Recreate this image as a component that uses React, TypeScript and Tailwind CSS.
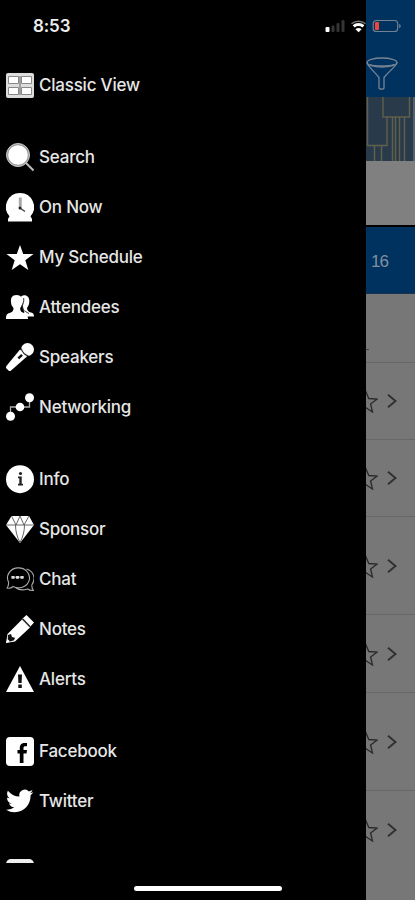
import React from 'react';

interface MenuItem {
  label: string;
  icon: React.ReactNode;
}

const menuGroups: MenuItem[][] = [
  [
    {
      label: 'Classic View',
      icon: (
        <>
          <rect x="0" y="2" width="28" height="25" rx="2" fill="#ddd" />
          <path d="M2.500 5.500h10v7h-10zM15.500 5.500h10v7h-10zM2.500 16.500h10v7h-10zM15.500 16.500h10v7h-10z" fill="#fff" stroke="#888" strokeWidth="1" />
          <path d="M14 5v19" stroke="#888" strokeWidth="1.500" />
        </>
      ),
    },
  ],
  [
    {
      label: 'Search',
      icon: (
        <>
          <circle cx="12" cy="12" r="11.500" fill="#999" stroke="#ccc" strokeWidth="1" />
          <circle cx="12" cy="12" r="9.800" />
          <path d="M20 20l7.500 7.500" stroke="#bbb" strokeWidth="2" />
        </>
      ),
    },
    {
      label: 'On Now',
      icon: (
        <>
          <path d="M14 0a14 14 0 0 1 10.500 23.300L26 26v2.500H2V26l1.500-2.700A14 14 0 0 1 14 0z" />
          <path d="M14 15l5 3.500" fill="none" stroke="#444" strokeWidth="1.500" />
          <path d="M14.300 4.500v10" stroke="#aaa" strokeWidth="3" />
          <circle cx="14" cy="15" r="1.500" fill="#222" />
        </>
      ),
    },
    {
      label: 'My Schedule',
      icon: <path d="M14 2l3.200 9H27.500l-8.200 6.200 3 9.800L14 21.200 5.700 27l3-9.800L.5 11h10.300z" />,
    },
    {
      label: 'Attendees',
      icon: (
        <>
          <path d="M15 3.500c4-3 9 0 8.300 5.500-.2 3-1.300 4.500-2.300 6 .2 3 1.500 3.700 4 4.500 2.200.8 3 1.500 3 4h-9z" />
          <path d="M10.500 2c4.500 0 6.300 3 5.900 7-.2 3-1 4.500-2.200 6 0 3.400 1.300 4.200 4 5 2.600.9 3.800 2 3.800 6H0c0-4 .8-5.200 3.500-6 2.500-.8 4-1.700 4-5C6 13.500 5.200 12 5 9c-.4-4 1-7 5.500-7z" />
          <path d="M17.700 5c.3 3-.2 5.500-1.700 8 0 3.500 2 4.800 7 7.500" fill="none" stroke="#333" strokeWidth="1" />
        </>
      ),
    },
    {
      label: 'Speakers',
      icon: (
        <>
          <circle cx="21.500" cy="6.500" r="6.500" />
          <path d="M14 6.500L0 23.500V25l3 3h1.500L21 13.500z" />
          <path d="M15.200 5.500c1 3.500 3.300 6.200 7.200 7.500" fill="none" stroke="#333" strokeWidth="1.100" />
          <path d="M11.500 14.500l3.700-3.500 1.700 1.700-3.700 3.500z" fill="#111" />
        </>
      ),
    },
    {
      label: 'Networking',
      icon: (
        <>
          <path d="M4.500 23V14H23.500V6" fill="none" stroke="#aaa" strokeWidth="1.300" />
          <circle cx="4.500" cy="23.300" r="4.500" />
          <circle cx="14" cy="14" r="4.300" />
          <circle cx="23.500" cy="4.700" r="4.500" />
        </>
      ),
    },
  ],
  [
    {
      label: 'Info',
      icon: (
        <>
          <circle cx="14" cy="14.200" r="14" />
          <path d="M12 11.500h3.700v7.300H17V20.500h-5v-1.700h1.300v-5.600H12z" fill="#222" />
          <circle cx="14.500" cy="8.500" r="1.600" fill="#222" />
        </>
      ),
    },
    {
      label: 'Sponsor',
      icon: (
        <>
          <path d="M5.500 1h17.500L28 10 14 28 0 10z" />
          <path d="M0 10h28M5.500 1l4.500 9 4-9 4 9 5-9M9.500 10c0 6 1.500 12 4.500 17.500 3-5.500 4.500-11.500 4.500-17.500" fill="none" stroke="#555" strokeWidth=".9" />
        </>
      ),
    },
    {
      label: 'Chat',
      icon: (
        <g fill="none" stroke="#aaa" strokeWidth="1.100">
          <path d="M2.500 17A11 10 0 1 1 7 21.500C5.500 23 3 23.500 1 23c1.200-1.500 1.800-3.500 1.500-6z" />
          <path d="M20.500 4C28 6 30 14 26 19.500c-.5 2.500.2 4.500 1.500 6-2.800.3-4.500-.5-6-1.500-4.500 1.500-9 .8-12-1.500" />
          <path d="M5.500 12.300h12.500" stroke="#777" strokeWidth="1.500" />
          <path d="M5.500 12.300h3m1.500 0h3m1.500 0h3" stroke="#ddd" strokeWidth="2.800" />
        </g>
      ),
    },
    {
      label: 'Notes',
      icon: (
        <>
          <path d="M20.500 0L28 7.500l-4 4.500-8-8zM16 4.500l8 8L9 26.500l-9 1.500 1.500-9z" />
          <path d="M16.500 3.800l7.700 7.900" stroke="#222" strokeWidth="1.300" />
          <path d="M2 20l3-1 1 3 3 .7-1 2.500-4.500 1.500-1.800-2z" fill="#111" />
          <path d="M0 28l1.500-4 2.500 2.500z" />
        </>
      ),
    },
    {
      label: 'Alerts',
      icon: (
        <>
          <path d="M14 1l14 26H0z" />
          <path d="M12 9.500h4l-.4 8.500h-3.200zM12.300 19.500h3.500V23h-3.500z" fill="#111" />
        </>
      ),
    },
  ],
  [
    {
      label: 'Facebook',
      icon: (
        <>
          <rect width="28" height="29" rx="4" />
          <path d="M13.800 26V16.500H11.500V13h2.300v-2c0-3.500 1.800-5 5-5H21v3.300h-1.600c-1.400 0-1.900.6-1.900 1.900V13H21l-.5 3.500h-3V26z" fill="#000" />
        </>
      ),
    },
    {
      label: 'Twitter',
      icon: (
        <path
          transform="translate(0 0) scale(1.14 1.160)"
          d="M23.953 4.570a10 10 0 0 1-2.825.775 4.958 4.958 0 0 0 2.163-2.723c-.951.555-2.005.959-3.127 1.184a4.920 4.920 0 0 0-8.384 4.482C7.690 8.095 4.067 6.130 1.640 3.162a4.822 4.822 0 0 0-.666 2.475c0 1.710.870 3.213 2.188 4.096a4.904 4.904 0 0 1-2.228-.616v.060a4.923 4.923 0 0 0 3.946 4.827 4.996 4.996 0 0 1-2.212.085 4.936 4.936 0 0 0 4.604 3.417 9.867 9.867 0 0 1-6.102 2.105c-.390 0-.779-.023-1.170-.067a13.995 13.995 0 0 0 7.557 2.209c9.053 0 13.998-7.496 13.998-13.985 0-.210 0-.420-.015-.630A9.935 9.935 0 0 0 24 4.590z"
        />
      ),
    },
  ],
  [{ label: '', icon: <rect width="28" height="28" rx="5" fill="#eee" /> }],
];

function MenuRow({ label, icon }: MenuItem) {
  return (
    <div className="flex h-[50px] items-center">
      <svg viewBox="0 0 28 29" className="ml-1.5 h-[29px] w-7 shrink-0" fill="#fff">
        {icon}
      </svg>
      <span className="mt-px ml-[5px] text-[17px] leading-none font-medium tracking-[-0.22px] text-[#e6e6e6]">{label}</span>
    </div>
  );
}

function AgendaRow({ className }: { className: string }) {
  return (
    <div className={`flex shrink-0 items-center border-[#676767] ${className}`}>
      <svg viewBox="0 0 24 24" className="-ml-3 h-6 w-6 shrink-0" fill="none" stroke="#2a2a2a" strokeWidth="1.300">
        <path d="M12 3l2.800 6.500 8.500.5-6.700 5 1.900 8-6.500-4.300L5.500 23l1.900-8L.7 10l8.500-.5z" />
      </svg>
      <svg viewBox="0 0 10 14" className="ml-[9px] h-3.5 w-2.5 shrink-0" fill="none" stroke="#303030" strokeWidth="1.900">
        <path d="M1 .7l7.500 6.300L1 13.300" />
      </svg>
    </div>
  );
}

/**
 * Dimmed agenda screen that stays visible beside the open drawer
 */
function AgendaPeek() {
  return (
    <div className="flex h-full w-[49px] flex-col overflow-hidden bg-[#777]">
      <div className="h-[97px] shrink-0 bg-[#003260] pt-[57px]">
        <svg viewBox="0 0 32 33" className="h-[33px] w-8" fill="none" stroke="#768494" strokeWidth="1.300">
          <ellipse cx="16" cy="5.500" rx="15" ry="4.500" />
          <path d="M1 5.500c0 3 6 7.500 12 15V31c0 1.500 5 1.500 5 0V20.500C24 13 31 8.500 31 5.500M4 7.500c5 2 18 2 24 0" />
        </svg>
      </div>
      <div className="h-16 shrink-0 bg-[#293b4b]">
        <svg viewBox="0 0 49 64" className="h-16 w-[49px]" fill="none" stroke="#625f4b" strokeWidth="1.400">
          <path d="M1.500 0v48.500H21V20M17 0v20h26.500V0M8.500 48.500V64M15.500 48.500V64M26.500 20v44M29.500 20v44M33.500 20v44M38.500 20v44" />
          <path d="M48 0v64" stroke="#536170" strokeWidth="2" />
        </svg>
      </div>
      <div className="h-16 shrink-0 bg-[#808080]" />
      <div className="h-0.5 shrink-0 bg-black" />
      <div className="flex h-[67px] shrink-0 items-center border-b border-[#1b3550] bg-[#003260] pt-1 pl-[5px] font-['Liberation_Sans',sans-serif] text-[17px] tracking-[-1px] text-[#8290a0]">
        16
      </div>
      <div className="flex h-[69px] shrink-0 items-end border-b border-[#676767] pb-3">
        <div className="h-px w-[3px] bg-[#444]" />
      </div>
      <AgendaRow className="h-[77px] border-b" />
      <AgendaRow className="h-[77px] border-b" />
      <AgendaRow className="h-[98px] border-b" />
      <AgendaRow className="h-[78px] border-b" />
      <AgendaRow className="h-[98px] border-b" />
      <AgendaRow className="h-[77px]" />
    </div>
  );
}

function StatusIcons() {
  return (
    <svg viewBox="0 0 78 16" className="absolute top-[18px] left-[325px] h-4 w-[78px]" fill="#fff">
      <rect x="0.500" y="9" width="4" height="5" rx="1" />
      <g fill="#343434">
        <rect x="6.500" y="7.500" width="3" height="6.500" rx="1" />
        <rect x="11.500" y="5" width="3" height="9" rx="1" />
        <rect x="16.500" y="2" width="3" height="12" rx="1" />
      </g>
      <g fill="none" stroke="#fff">
        <path d="M26.500 5.800c4-3.500 10-3.500 14 0" stroke="#777" strokeWidth="1.500" />
        <path d="M28.700 8.300c2.700-2.500 7-2.500 9.700 0" strokeWidth="3" />
      </g>
      <path d="M30.500 11.200c1.800-1.500 4.300-1.500 6.100 0L33.600 14.300z" />
      <rect x="48.200" y="2.500" width="24.500" height="11" rx="3.300" fill="none" stroke="#738191" strokeWidth="1.200" />
      <path d="M74.200 6c2 .5 2 3.500 0 4z" fill="#738191" />
      <rect x="50" y="4" width="4" height="8" rx="1" fill="#f14539" />
    </svg>
  );
}

export default function App() {
  return (
    <div className="relative flex h-[900px] w-[415px] overflow-hidden bg-black font-['Inter',sans-serif]">
      <aside className="w-[366px] shrink-0 bg-black">
        <div className="flex h-[60px] items-start pt-[18px] pl-[33px] text-[17px] leading-none font-semibold tracking-[-0.1px] text-[#eee]">8:53</div>
        <nav className="flex h-[803px] flex-col gap-[22px] overflow-hidden">
          {menuGroups.map((group, i) => (
            <div key={i} className="shrink-0">
              {group.map((item) => (
                <MenuRow key={item.label} {...item} />
              ))}
            </div>
          ))}
        </nav>
      </aside>
      <AgendaPeek />
      <StatusIcons />
      {/* Home indicator */}
      <div className="absolute bottom-[9px] left-[134px] h-[5px] w-[148px] rounded-full bg-white" />
    </div>
  );
}
